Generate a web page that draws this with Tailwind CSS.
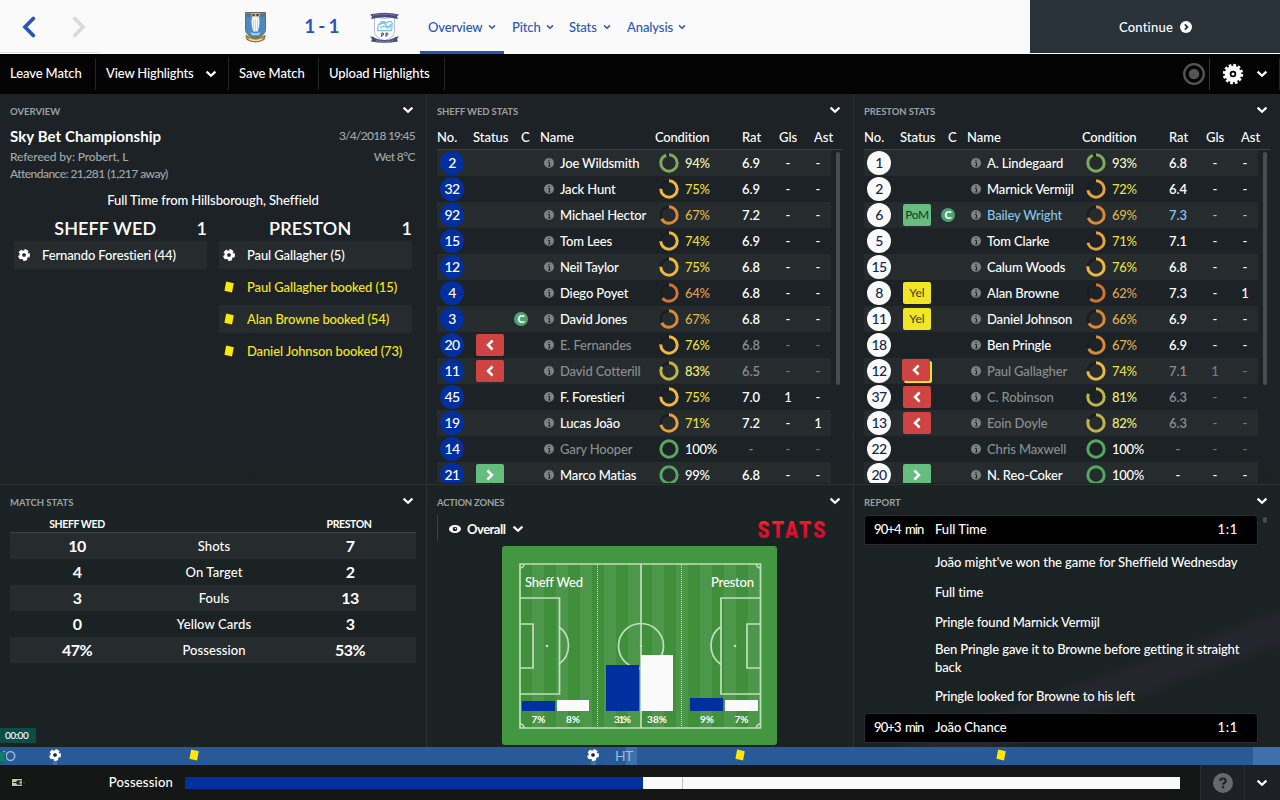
<!DOCTYPE html>
<html lang="en">
<head>
  <meta charset="UTF-8" />
  <title>Sheff Wed 1 - 1 Preston</title>
  <script src="https://cdn.jsdelivr.net/npm/@tailwindcss/browser@4"></script>
</head>
<body class="w-[1280px] h-[800px] overflow-hidden bg-[#1c2325] text-white font-['Lato','Open_Sans',sans-serif] text-[13px] leading-4 font-medium">

  <!-- Shared icons -->
  <svg class="hidden">
    <symbol id="chev" viewBox="0 0 12 8"><path d="M1.6 1.6 L6 5.8 L10.4 1.6" fill="none" stroke="currentColor" stroke-width="2.2"/></symbol>
    <symbol id="info" viewBox="0 0 10 10"><circle cx="5" cy="5" r="5" fill="#7d8283"/><path d="M4 4.500h1.500v3.300M4 8h2.500" stroke="#1c2325" stroke-width="1" fill="none"/><path d="M4.400 1.800h1.200v1.200H4.400z" fill="#1c2325"/></symbol>
    <symbol id="ball" viewBox="0 0 12 12"><circle cx="6" cy="6" r="4.600" fill="#fff"/><circle cx="6" cy="6" r="4.900" fill="none" stroke="#fff" stroke-width="2" stroke-dasharray="3.900 2.257" transform="rotate(-20 6 6)"/><path d="M6 3.900 8 5.300 7.300 7.700H4.700L4 5.300Z" fill="#1e2a35"/></symbol>
    <symbol id="card" viewBox="0 0 12 12"><path d="M3.200.6 10.800 2.200 9 11.400 1.400 9.800Z" fill="#ffe60a"/></symbol>
  </svg>

  <!-- Title bar -->
  <header class="flex h-[54px] bg-[#fafafa] text-[#2a55b8]">
    <div class="flex items-center w-[100px] h-[53px] border-b border-[#e4e5e7] pl-[22px] gap-[36px]">
      <svg class="w-[14px] h-[22px] mt-px" viewBox="0 0 14 22"><path d="M11.300 2.500 3 11l8.300 8.500" fill="none" stroke="#2a55b8" stroke-width="3.800" stroke-linecap="round"/></svg>
      <svg class="w-[14px] h-[22px] mt-px" viewBox="0 0 14 22"><path d="M2.700 2.500 11 11l-8.300 8.500" fill="none" stroke="#d9dadc" stroke-width="3.800" stroke-linecap="round"/></svg>
    </div>
    <div class="flex items-center w-[320px] pl-[145px]">
      <svg class="w-[21px] h-[31px]" viewBox="0 0 21 31">
        <path d="M.5.5h20v17q0 6-10 9Q.5 23.500.5 17.500Z" fill="#4b8bc4" stroke="#6d6a5c"/>
        <path d="M6.500 1h8v4h-8z" fill="#c7b98e"/><path d="M7.500 2h2v2h-2zM11.500 2h2v2h-2z" fill="#333"/>
        <path d="M1.500 2h4v3h-4zM15.500 2h4v3h-4z" fill="#56728c"/>
        <path d="M7 5.500q3.500-1.500 7 0 1.500 8-1.500 14h-4q-3-6-1.500-14Z" fill="#f4f6f7"/>
        <path d="M8.500 8v9M10.500 7v12M12.500 8v9" stroke="#b8c5d0" stroke-width=".7"/>
        <path d="M5.500 20q5 3 10 0l-1.500 3h-7z" fill="#c3d7e8"/>
        <path d="M.8 23.500q9.700 5.500 19.400 0l-1 4q-8.700 5-17.400 0Z" fill="#c29a35" stroke="#5d4c20" stroke-width=".7"/>
        <path d="M4 27q6.500 3 13 0" fill="none" stroke="#f5e7ad" stroke-width="1.200"/>
      </svg>
      <div class="w-[104px] pl-[7px] text-center text-[19px] leading-6 font-bold tracking-[-0.8px] -mt-[2px]">1 - 1</div>
      <svg class="w-[31px] h-[31px] -ml-px" viewBox="0 0 31 31">
        <path d="M5.500 5q10 3 20 0v14q0 7-10 9.500Q5.500 26 5.500 19Z" fill="#fff" stroke="#a8abc4" stroke-width=".8"/>
        <path d="M1 2.500Q15.500-1 30 2.500l-2 2 1 2.500q-13.500-3.500-27 0l1-2.500Z" fill="#4a4c7d"/>
        <path d="M4 3.500q11.500-2.500 23 0" stroke="#9798b8" stroke-dasharray="1.300 1" fill="none"/>
        <path d="M8 17.500c2-2 0-4 2-5s1-3 4-3 2 2 4 1 4-2 5 0-1 3 0 5-2 1-1 3M8 18.500h15M10 13q5-4 7 0t5-1M11 16q4-3 6-1t5-1" fill="none" stroke="#7cc4ec" stroke-width="1.300"/>
        <path d="M12.700 25v-4h1.500q1 1.100 0 2.200h-1.500M17 25v-4h1.500q1 1.100 0 2.200h-1.500" fill="none" stroke="#45477b"/>
        <path d="M1 24.500q4 0 6 2 8.500 3 17 0 2-2 6-2l-2 2.500 1 2.500q-13.500 2.500-27 0l1-2.500Z" fill="#4a4c7d"/>
        <path d="M7 28.700q8.500 1.400 17 0" stroke="#a3a4c0" stroke-dasharray="1.300 1" fill="none"/>
      </svg>
    </div>
    <nav class="flex h-[54px]">
      <div class="flex items-center gap-[6px] w-[84px] pl-2 border-b-[3px] border-[#2a55b8] pt-[3px] tracking-[-0.15px]">Overview<svg class="w-2 h-[6px]"><use href="#chev"/></svg></div>
      <div class="flex items-center gap-[5px] w-[57px] pl-2 tracking-[-0.1px]">Pitch<svg class="w-2 h-[6px]"><use href="#chev"/></svg></div>
      <div class="flex items-center gap-[6px] w-[58px] pl-2 tracking-[-0.1px]">Stats<svg class="w-2 h-[6px]"><use href="#chev"/></svg></div>
      <div class="flex items-center gap-[5px] pl-2 tracking-[-0.1px]">Analysis<svg class="w-2 h-[6px]"><use href="#chev"/></svg></div>
    </nav>
    <div class="ml-auto flex items-center w-[250px] h-[53px] pl-[89px] gap-[7px] bg-[#2a3239] text-white pt-px">
      <span class="tracking-[0.2px]">Continue</span>
      <svg class="w-3 h-3" viewBox="0 0 12 12"><circle cx="6" cy="6" r="6" fill="#fff"/><path d="M4.800 3.300 7.500 6 4.800 8.700" fill="none" stroke="#2a3239" stroke-width="1.800"/></svg>
    </div>
  </header>

  <!-- Match toolbar -->
  <div class="flex items-center h-10 bg-[#040303]">
    <div class="flex items-center h-8 w-24 pl-[10px] border-r border-[#262626] pb-[3px] tracking-[-0.1px]">Leave Match</div>
    <div class="flex items-center h-8 w-[133px] pl-[10px] border-r border-[#262626] pb-[3px] tracking-[-0.15px]">View Highlights<svg class="w-3 h-2 ml-auto mr-[11px] mt-[3px]"><use href="#chev"/></svg></div>
    <div class="flex items-center h-8 w-[90px] pl-[10px] border-r border-[#262626] pb-[3px] tracking-[-0.1px]">Save Match</div>
    <div class="flex items-center h-8 w-[126px] pl-[10px] border-r border-[#262626] pb-[3px] tracking-[-0.08px]">Upload Highlights</div>
    <div class="ml-auto flex items-center h-8 w-[97px] border-r border-[#262626]">
      <svg class="w-[22px] h-[22px]" viewBox="0 0 22 22"><circle cx="11" cy="11" r="9.800" fill="none" stroke="#555" stroke-width="2.300"/><circle cx="11" cy="11" r="5.300" fill="#555"/></svg>
      <div class="w-px h-8 bg-[#333] ml-1"></div>
      <svg class="w-[22px] h-[22px] ml-3" viewBox="-11 -11 22 22"><circle r="8.700" fill="none" stroke="#fff" stroke-width="3" stroke-dasharray="2.700 1.855"/><circle r="5.800" fill="none" stroke="#fff" stroke-width="5"/><circle r="1.500" fill="#fff"/></svg>
      <svg class="w-3 h-2 ml-3"><use href="#chev"/></svg>
    </div>
  </div>

  <main class="grid grid-cols-[427px_427px_426px] grid-rows-[391px_262px] h-[653px] bg-linear-to-b from-[#1d2227] to-[#1b2223]">

    <!-- Overview -->
    <section class="border-r border-b border-[#2b3335] px-[10px]">
      <div class="flex justify-between pt-[10px] pr-[2px] h-[34px]"><h2 class="text-[9.500px] font-bold text-[#9ca0a1]">OVERVIEW</h2><svg class="w-3 h-2 mt-[2px]"><use href="#chev"/></svg></div>
      <div class="flex justify-between pr-px"><b class="text-[15px] tracking-[0.08px]">Sky Bet Championship</b><span class="text-xs tracking-[-0.75px] text-[#a3a7a8]">3/4/2018 19:45</span></div>
      <div class="flex justify-between pr-px mt-[5px] text-xs text-[#a3a7a8]"><span class="tracking-[-0.13px]">Refereed by: Probert, L</span><span class="tracking-[-0.6px]">Wet 8°C</span></div>
      <div class="mt-px text-xs tracking-[-0.55px] text-[#a3a7a8]">Attendance: 21,281 (1,217 away)</div>
      <div class="mt-[10px] text-center tracking-[-0.1px]">Full Time from Hillsborough, Sheffield</div>
      <div class="grid grid-cols-[193px_193px] gap-x-3 pl-1 mt-[8px]">
        <div>
          <div class="flex h-[25px] text-lg leading-6 font-semibold"><span class="w-[184px] text-center tracking-[0.1px]">SHEFF WED</span><span>1</span></div>
          <div id="homeEvents" class="flex flex-col gap-1"></div>
        </div>
        <div>
          <div class="flex h-[25px] text-lg leading-6 font-semibold"><span class="w-[185px] text-center tracking-[0.2px]">PRESTON</span><span>1</span></div>
          <div id="awayEvents" class="flex flex-col gap-1"></div>
        </div>
      </div>
    </section>

    <!-- Home team stats -->
    <section class="border-r border-b border-[#2b3335] px-[10px]">
      <div class="flex justify-between pt-[10px] pr-[2px] h-[34px]"><h2 class="text-[9.500px] font-bold tracking-[-0.12px] text-[#9ca0a1]">SHEFF WED STATS</h2><svg class="w-3 h-2 mt-[2px]"><use href="#chev"/></svg></div>
      <div class="grid grid-cols-[36px_48px_19px_115px_87px_37px_35px_29px] h-[22px] w-[406px] pt-px border-b border-[#3a4043]"><span>No.</span><span>Status</span><span>C</span><span>Name</span><span class="tracking-[-0.2px]">Condition</span><span>Rat</span><span>Gls</span><span>Ast</span></div>
      <div class="flex gap-[5px] h-[333px] overflow-hidden">
        <div id="homeRows" class="w-[394px]"></div>
        <div class="w-1 h-[233px] mt-[2px] rounded-full bg-[#484d50]"></div>
      </div>
    </section>

    <!-- Away team stats -->
    <section class="border-b border-[#2b3335] px-[10px]">
      <div class="flex justify-between pt-[10px] pr-[2px] h-[34px]"><h2 class="text-[9.500px] font-bold tracking-[-0.1px] text-[#9ca0a1]">PRESTON STATS</h2><svg class="w-3 h-2 mt-[2px]"><use href="#chev"/></svg></div>
      <div class="grid grid-cols-[36px_48px_19px_115px_87px_37px_35px_29px] h-[22px] w-[406px] pt-px border-b border-[#3a4043]"><span>No.</span><span>Status</span><span>C</span><span>Name</span><span class="tracking-[-0.2px]">Condition</span><span>Rat</span><span>Gls</span><span>Ast</span></div>
      <div class="flex gap-[5px] h-[333px] overflow-hidden">
        <div id="awayRows" class="w-[394px]"></div>
        <div class="w-1 h-[233px] mt-[2px] rounded-full bg-[#484d50]"></div>
      </div>
    </section>

    <!-- Match stats -->
    <section class="border-r border-[#2b3335] px-[10px]">
      <div class="flex justify-between pt-[10px] pr-[2px] h-[31px]"><h2 class="text-[9.500px] font-bold text-[#9ca0a1]">MATCH STATS</h2><svg class="w-3 h-2 mt-[2px]"><use href="#chev"/></svg></div>
      <div class="grid grid-cols-[134px_140px_130px] h-[17px] w-[406px] text-center text-[10.500px] tracking-[-0.4px] font-bold border-b border-[#3a4043]"><span>SHEFF WED</span><span></span><span>PRESTON</span></div>
      <div id="matchStats"></div>
    </section>

    <!-- Action zones -->
    <section class="border-r border-[#2b3335] px-[10px]">
      <div class="flex justify-between pt-[10px] pr-[2px] h-[30px]"><h2 class="text-[9.500px] font-bold tracking-[-0.2px] text-[#9ca0a1]">ACTION ZONES</h2><svg class="w-3 h-2 mt-[2px]"><use href="#chev"/></svg></div>
      <div class="flex items-center h-[26px] border-l border-[#3a4043] pl-[11px] pr-[14px] pt-[2px]">
        <svg class="w-3 h-2" viewBox="0 0 12 8"><ellipse cx="6" cy="4" rx="6" ry="4" fill="#fff"/><circle cx="6" cy="4" r="2.300" fill="#1c2325"/><circle cx="6.500" cy="3.500" r=".7" fill="#fff"/></svg>
        <b class="ml-[6px] tracking-[-0.5px]">Overall</b>
        <svg class="w-3 h-2 ml-[7px]"><use href="#chev"/></svg>
        <svg class="w-[72px] h-[24px] ml-auto" viewBox="0 0 72 24">
          <defs><linearGradient id="red" x1="0" y1="0" x2=".15" y2="1"><stop offset="0" stop-color="#f26a25"/><stop offset=".35" stop-color="#ee1429"/><stop offset="1" stop-color="#c00c36"/></linearGradient></defs>
          <text x="0.500" y="20.500" textLength="70" lengthAdjust="spacingAndGlyphs" letter-spacing="2.500" font-family="Roboto" font-weight="900" font-size="23.500" fill="url(#red)">STATS</text>
        </svg>
      </div>
      <svg class="w-[275px] h-[199px] ml-[65px] mt-[5px]" viewBox="0 0 275 199">
        <defs>
          <pattern id="grass" x="18" width="24" height="199" patternUnits="userSpaceOnUse"><path d="M0 0h12v199H0z" fill="#40903b"/><path d="M12 0h12v199H12z" fill="#4c974a"/></pattern>
        </defs>
        <rect width="275" height="199" rx="3" fill="#429740"/>
        <rect x="18" y="18" width="241" height="164" fill="url(#grass)"/>
        <g fill="none" stroke="#c2dec0" stroke-width="1.700">
          <path d="M18 18h240.500v164H18zM139 18v164M18 52h39.500v96H18M18 78h13v44H18M258.500 52H219v96h39.500M258.500 78H245v44h13.500M56.500 80.500a23 23 0 0 1 0 38M219 80.500a23 23 0 0 0 0 38M22 18a4 4 0 0 1-4 4M254.500 18a4 4 0 0 0 4 4M22 182a4 4 0 0 0-4-4M254.500 182a4 4 0 0 1 4-4"/>
          <circle cx="139" cy="100" r="22.500"/>
        </g>
        <g fill="#c2dec0"><circle cx="139" cy="100" r="1.300"/><circle cx="45" cy="100" r="1.300"/><circle cx="233" cy="100" r="1.300"/></g>
        <path d="M95.500 19v162M179.500 19v162" stroke="#f4f41e" stroke-dasharray="1 1"/>
        <g fill="#0030a0"><rect x="20" y="155" width="33" height="10"/><rect x="104" y="119" width="33" height="46"/><rect x="188" y="152" width="33" height="13"/></g>
        <g fill="#fafafa"><rect x="55" y="154" width="32" height="11"/><rect x="139" y="109" width="32" height="56"/><rect x="223" y="154" width="33" height="11"/></g>
        <g fill="#fff" font-size="13"><text x="23" y="41" textLength="58">Sheff Wed</text><text x="209" y="41" textLength="43">Preston</text></g>
        <g fill="#fff" font-size="10" font-weight="700" text-anchor="middle"><text x="36.500" y="177">7%</text><text x="71" y="177">8%</text><text x="120.500" y="177" textLength="17">31%</text><text x="155" y="177">38%</text><text x="205" y="177">9%</text><text x="239.500" y="177">7%</text></g>
      </svg>
    </section>

    <!-- Report -->
    <section class="px-[10px] bg-[linear-gradient(160deg,transparent_66%,#23262c_69%,#23262c_74%,transparent_77%)]">
      <div class="flex justify-between pt-[10px] pr-[2px] h-[30px]"><h2 class="text-[9.500px] font-bold text-[#9ca0a1]">REPORT</h2><svg class="w-3 h-2 mt-[2px]"><use href="#chev"/></svg></div>
      <div class="flex gap-[5px]">
        <div class="w-[394px]">
          <div class="flex h-[30px] pt-[5px] pl-[9px] pr-[21px] bg-black border border-[#2a2b33] rounded-t"><span class="w-[61px] tracking-[-0.9px] [word-spacing:2px]">90+4 min</span><span>Full Time</span><span class="ml-auto tracking-[-1.3px]">1 : 1</span></div>
          <div class="pl-[71px] tracking-[-0.08px]">
            <p class="pt-[9px] h-[31px] whitespace-nowrap">João might've won the game for Sheffield Wednesday</p>
            <p class="pt-2 h-[30px]">Full time</p>
            <p class="pt-2 h-[28px] tracking-[-0.15px]">Pringle found Marnick Vermijl</p>
            <p class="pt-[6px] h-[45px] leading-[18px] whitespace-nowrap tracking-[-0.13px]">Ben Pringle gave it to Browne before getting it straight<br>back</p>
            <p class="pt-[9px] h-[34px] tracking-[-0.17px]">Pringle looked for Browne to his left</p>
          </div>
          <div class="flex h-[30px] pt-[5px] pl-[9px] pr-[21px] bg-black border border-[#2a2b33] rounded-t"><span class="w-[61px] tracking-[-0.9px] [word-spacing:2px]">90+3 min</span><span class="tracking-[-0.1px]">João Chance</span><span class="ml-auto tracking-[-1.3px]">1 : 1</span></div>
        </div>
        <div class="w-1 h-[6px] mt-[2px] rounded-full bg-[#484d50]"></div>
      </div>
    </section>
  </main>

  <!-- Timeline, markers are pinned at their minute -->
  <div class="relative h-[18px] bg-[#275a96]">
    <div class="absolute left-0 -top-[19px] w-9 h-[15px] bg-[#0d4d47] pl-[5px] text-[10px] tracking-[-0.5px] leading-[15px]">00:00</div>
    <span class="absolute -left-[4px] top-[1px] text-sm leading-4 text-[#9fbbdb] font-normal">KO</span>
    <span class="absolute -left-[6px] top-[4px] size-3 rounded-full bg-[#0b8068] border border-[#0a5a50]"></span>
    <div class="absolute left-[53px] bottom-0 w-1 h-[10px] bg-[#3f70ae]"></div>
    <div class="absolute left-[591px] bottom-0 w-[5px] h-[10px] bg-[#3f70ae]"></div>
    <div class="absolute left-[626px] top-0 w-[11px] h-[18px] bg-[#3f70ae]"></div>
    <div class="absolute left-[1253px] top-0 w-[27px] h-[18px] bg-[#3f70ae]"></div>
    <span class="absolute left-[615px] top-[1px] text-sm leading-4 text-[#9fbbdb] font-normal tracking-[-0.8px]">HT</span>
    <svg class="absolute left-[49px] top-[2px] size-3"><use href="#ball"/></svg>
    <svg class="absolute left-[188px] top-[2px] size-3"><use href="#card"/></svg>
    <svg class="absolute left-[587px] top-[2px] size-3"><use href="#ball"/></svg>
    <svg class="absolute left-[734px] top-[2px] size-3"><use href="#card"/></svg>
    <svg class="absolute left-[995px] top-[2px] size-3"><use href="#card"/></svg>
  </div>

  <!-- Possession footer -->
  <footer class="flex items-center h-[35px] bg-[#151616]">
    <svg class="w-[14px] h-[9px] ml-[11px]" viewBox="0 0 14 9"><path d="M.5.5h11v8H.5z" fill="#b5d39a" stroke="#080808"/><path d="M12 3h2v3h-2z" fill="#2b2b2b"/><path d="M2 4.500h3M8 3h3M8 6h3" stroke="#222"/><path d="M8.500 2v5Q5 7 5 4.500T8.500 2Z" fill="#222"/></svg>
    <span class="ml-auto mr-3 -mt-[2px] tracking-[0.2px]">Possession</span>
    <div class="flex w-[995px] h-3 bg-[#fafafa] mt-px"><div class="w-[458px] bg-[#0030a0]"></div><div class="w-10 border-r border-[#c4c4c4]"></div></div>
    <div class="flex items-center justify-center w-[44px] h-full ml-5 border-l border-[#272d30] bg-[#1d2125]">
      <svg class="size-5" viewBox="0 0 20 20"><circle cx="10" cy="10" r="10" fill="#66696c"/><path d="M7.300 8q0-2.500 2.700-2.500T12.700 8q0 1.300-1.500 2-1.200.6-1.200 1.800M10 13v2.200" fill="none" stroke="#1d2125" stroke-width="2.200"/></svg>
    </div>
    <div class="flex items-center justify-center w-9 h-full border-l border-[#272d30] bg-[#1d2125]"><svg class="w-3 h-2 mr-[2px]"><use href="#chev"/></svg></div>
  </footer>

  <script>
    // no, status, captain, name, condition, rating, goals, assists, state
    const home = [
      [2, "", 0, "Joe Wildsmith", 94, "6.9", "-", "-"],
      [32, "", 0, "Jack Hunt", 75, "6.9", "-", "-"],
      [92, "", 0, "Michael Hector", 67, "7.2", "-", "-"],
      [15, "", 0, "Tom Lees", 74, "6.9", "-", "-"],
      [12, "", 0, "Neil Taylor", 75, "6.8", "-", "-"],
      [4, "", 0, "Diego Poyet", 64, "6.8", "-", "-"],
      [3, "", 1, "David Jones", 67, "6.8", "-", "-"],
      [20, "off", 0, "E. Fernandes", 76, "6.8", "-", "-", "dim"],
      [11, "off", 0, "David Cotterill", 83, "6.5", "-", "-", "dim"],
      [45, "", 0, "F. Forestieri", 75, "7.0", "1", "-"],
      [19, "", 0, "Lucas João", 71, "7.2", "-", "1"],
      [14, "", 0, "Gary Hooper", 100, "-", "-", "-", "dim"],
      [21, "on", 0, "Marco Matias", 99, "6.8", "-", "-"],
    ];
    const away = [
      [1, "", 0, "A. Lindegaard", 93, "6.8", "-", "-"],
      [2, "", 0, "Marnick Vermijl", 72, "6.4", "-", "-"],
      [6, "pom", 1, "Bailey Wright", 69, "7.3", "-", "-", "best"],
      [5, "", 0, "Tom Clarke", 71, "7.1", "-", "-"],
      [15, "", 0, "Calum Woods", 76, "6.8", "-", "-"],
      [8, "yel", 0, "Alan Browne", 62, "7.3", "-", "1"],
      [11, "yel", 0, "Daniel Johnson", 66, "6.9", "-", "-"],
      [18, "", 0, "Ben Pringle", 67, "6.9", "-", "-"],
      [12, "offyel", 0, "Paul Gallagher", 74, "7.1", "1", "-", "dim"],
      [37, "off", 0, "C. Robinson", 81, "6.3", "-", "-", "dim"],
      [13, "off", 0, "Eoin Doyle", 82, "6.3", "-", "-", "dim"],
      [22, "", 0, "Chris Maxwell", 100, "-", "-", "-", "dim"],
      [20, "on", 0, "N. Reo-Coker", 100, "-", "-", "-"],
    ];

    const left = `<svg class="w-2 h-3" viewBox="0 0 8 12"><path d="M6.600 1.500 2 6l4.600 4.500" fill="none" stroke="#fff" stroke-width="2.500"/></svg>`;
    const right = `<svg class="w-2 h-3" viewBox="0 0 8 12"><path d="M1.400 1.500 6 6l-4.600 4.500" fill="none" stroke="#fff" stroke-width="2.500"/></svg>`;
    const badges = {
      "": "",
      off: `<div class="flex items-center justify-center w-7 h-[22px] rounded-[2px] bg-[#d04343]">${left}</div>`,
      offyel: `<div class="w-7 h-[22px] rounded-[2px] bg-[#f0e626] translate-x-px translate-y-px"><div class="flex items-center justify-center w-7 h-[22px] rounded-[2px] bg-[#d04343] -translate-x-[2px] -translate-y-[2px]">${left}</div></div>`,
      on: `<div class="flex items-center justify-center w-7 h-[22px] rounded-[2px] bg-[#65bd80]">${right}</div>`,
      pom: `<div class="w-7 h-[22px] rounded-[2px] bg-[#65bd80] text-center leading-[21px] text-[12px] tracking-[-0.5px] text-[#26422f]">PoM</div>`,
      yel: `<div class="w-7 h-[22px] rounded-[2px] bg-[#f0e626] text-center leading-[21px] text-[12px] text-[#4a4710]">Yel</div>`,
    };

    function ringColor(c) {
      if (c >= 98) return "#57a763";
      if (c >= 90) return "#80ab5a";
      if (c >= 80) return "#c0b54b";
      if (c >= 74) return "#efb83f";
      if (c >= 70) return "#e6a23c";
      if (c >= 65) return "#d98a38";
      return "#cf7434";
    }
    function textColor(c) {
      if (c >= 98) return "#ffffff";
      if (c >= 90) return "#f6f6c0";
      if (c >= 80) return "#f0ec78";
      if (c >= 70) return "#e6df45";
      if (c >= 65) return "#dfb44c";
      return "#e0a050";
    }
    function ring(c) {
      const len = 2 * Math.PI * 8.2;
      return `<svg class="w-5 h-5 mr-[6px]" viewBox="-.5 -.5 20 20"><circle cx="9.500" cy="9.500" r="8.200" fill="none" stroke="#1a1e20" stroke-width="2.800"/><circle cx="9.500" cy="9.500" r="8.200" fill="none" stroke="${ringColor(c)}" stroke-width="3" stroke-dasharray="${len * c / 100} ${len}" transform="rotate(-90 9.500 9.500)"/></svg>`;
    }

    function playerRow([no, status, cap, name, cond, rat, gls, ast, state], i, shirt) {
      const stripe = i % 2 ? "" : "bg-[#262c2e]";
      const tone = state === "dim" ? "text-[#8a8e8f]" : state === "best" ? "text-[#84c4ee]" : "text-white";
      const minor = state === "dim" ? "text-[#777b7c]" : state === "best" ? "text-[#84c4ee]" : "text-white";
      return `<div class="grid grid-cols-[30px_46px_16px_31px_99px_74px_36px_38px_22px] items-center h-[26px] ${stripe}">
        <div class="flex items-center justify-center size-6 ml-[3px] rounded-full text-sm tracking-[-0.5px] ${shirt}">${no}</div>
        <div class="flex justify-center">${badges[status]}</div>
        <div class="flex justify-center">${cap ? `<div class="size-[14px] shrink-0 rounded-full bg-[#4ba470] text-center text-[11px] leading-[14px] font-black">C</div>` : ""}</div>
        <svg class="size-[10px] ml-[15px]"><use href="#info"/></svg>
        <div class="whitespace-nowrap tracking-[-0.15px] ${tone}">${name}</div>
        <div class="flex items-center" style="color:${textColor(cond)}">${ring(cond)}<span class="tracking-[-0.3px]">${cond}%</span></div>
        <div class="text-center font-semibold ${tone}">${rat}</div>
        <div class="text-center ${minor}">${gls}</div>
        <div class="text-center ${minor}">${ast}</div>
      </div>`;
    }
    document.getElementById("homeRows").innerHTML = home.map((p, i) => playerRow(p, i, "bg-[#0030a0] text-white")).join("");
    document.getElementById("awayRows").innerHTML = away.map((p, i) => playerRow(p, i, "bg-[#fafafa] text-[#14264f]")).join("");

    function eventRow([icon, text], i) {
      return `<div class="flex items-center h-7 pl-1 gap-3 whitespace-nowrap tracking-[-0.12px] ${i % 2 ? "" : "bg-[#262c2e]"} ${icon === "card" ? "text-[#f8e71c]" : "text-white"}">
        <svg class="size-3"><use href="#${icon}"/></svg>${text}</div>`;
    }
    document.getElementById("homeEvents").innerHTML = [["ball", "Fernando Forestieri (44)"]].map(eventRow).join("");
    document.getElementById("awayEvents").innerHTML = [
      ["ball", "Paul Gallagher (5)"],
      ["card", "Paul Gallagher booked (15)"],
      ["card", "Alan Browne booked (54)"],
      ["card", "Daniel Johnson booked (73)"],
    ].map(eventRow).join("");

    const stats = [["10", "Shots", "7"], ["4", "On Target", "2"], ["3", "Fouls", "13"], ["0", "Yellow Cards", "3"], ["47%", "Possession", "53%"]];
    document.getElementById("matchStats").innerHTML = stats.map(([h, label, a], i) =>
      `<div class="grid grid-cols-[134px_140px_132px] items-center h-[26px] text-center ${i % 2 ? "" : "bg-[#262c2e]"}">
        <b class="text-base leading-6 tracking-[-0.6px] pb-px">${h}</b><span class="tracking-[0.1px]">${label}</span><b class="text-base leading-6 tracking-[-0.6px] pb-px">${a}</b>
      </div>`).join("");
  </script>
</body>
</html>
